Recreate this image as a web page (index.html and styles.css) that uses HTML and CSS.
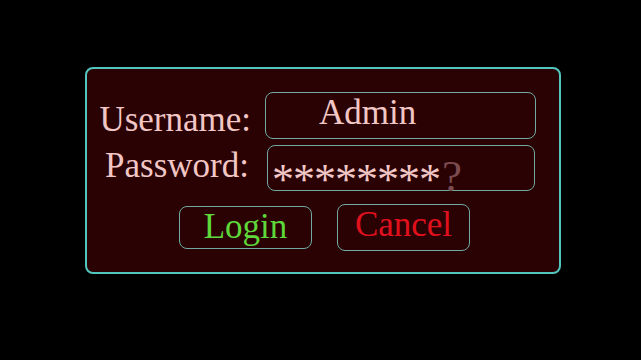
FILE: index.html
```html
<!DOCTYPE html>
<html>
<head>
<meta charset="utf-8">
<link rel="stylesheet" href="styles.css">
</head>
<body>
<div class="panel">
  <div class="row row-user">
    <div class="label label-user">Username:</div>
    <div class="field field-user">Admin</div>
  </div>
  <div class="row row-pass">
    <div class="label label-pass">Password:</div>
    <div class="field field-pass"><span class="stars">********</span><span class="hint">?</span></div>
  </div>
  <div class="actions">
    <div class="btn btn-login">Login</div>
    <div class="btn btn-cancel">Cancel</div>
  </div>
</div>
</body>
</html>
```
FILE: styles.css
```css
html, body {
  margin: 0;
  padding: 0;
  background: #000;
  height: 360px;
  overflow: hidden;
}
body {
  font-family: "Liberation Serif", "Times New Roman", serif;
  font-size: 35px;
  color: #f1c6c4;
}
.panel {
  box-sizing: border-box;
  width: 476px;
  height: 207px;
  margin: 67px 0 0 85px;
  border: 2px solid #52c6bd;
  border-radius: 8px;
  background: #2a0204;
  padding-top: 23px;
  display: flex;
  flex-direction: column;
}
.row {
  display: flex;
  align-items: flex-start;
}
.row-pass {
  margin-top: 6px;
}
.label {
  width: 164px;
  text-align: right;
  line-height: 39px;
  white-space: nowrap;
}
.label-user { margin-top: 8px; }
.label-pass { margin-top: 1px; width: 162px; }
.field {
  box-sizing: border-box;
  margin-left: 14px;
  border: 1.5px solid #6fa9a2;
  border-radius: 8px;
  line-height: 39px;
  white-space: nowrap;
}
.field-user {
  width: 271px;
  height: 47px;
  padding-left: 53px;
  padding-top: 0;
}
.field-pass {
  width: 268px;
  height: 46px;
  margin-left: 18px;
  padding-left: 4px;
  overflow: visible;
}
.stars {
  font-size: 44px;
  letter-spacing: -1px;
  position: relative;
  top: 14px;
}
.hint {
  font-size: 45px;
  color: #7b4b50;
  position: relative;
  top: 11px;
  margin-left: 2px;
}
.actions {
  display: flex;
  align-items: center;
  margin-top: 13px;
  margin-left: 92px;
  gap: 25px;
}
.btn {
  box-sizing: border-box;
  width: 133px;
  border: 1.5px solid #6fa9a2;
  border-radius: 8px;
  text-align: center;
  line-height: 39px;
}
.btn-login {
  height: 43px;
  color: #5ed83a;
}
.btn-cancel {
  height: 47px;
  color: #e0101c;
}
```
